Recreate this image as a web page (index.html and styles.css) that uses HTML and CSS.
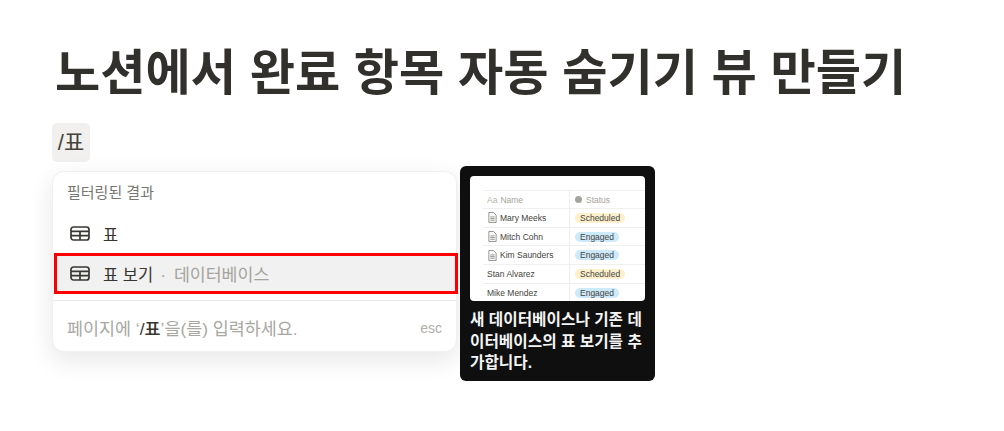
FILE: index.html
```html
<!DOCTYPE html>
<html lang="ko">
<head>
    <meta charset="UTF-8">
    <title>노션에서 완료 항목 자동 숨기기 뷰 만들기</title>
    <link rel="stylesheet" href="styles.css">
</head>
<body>
    <div class="page">
        <h1 class="title">노션에서 완료 항목 자동 숨기기 뷰 만들기</h1>
        <div class="slash">/표</div>

        <div class="popup-row">
            <!-- Slash menu -->
            <div class="menu">
                <div class="menu-label">필터링된 결과</div>
                <div class="menu-item">
                    <svg class="table-icon" viewBox="0 0 20 15"><rect x="1" y="1" width="18" height="13" rx="2.5"/><path d="M1 5.3H19M1 9.7H19M10 5.3V14"/></svg>
                    <span>표</span>
                </div>
                <div class="menu-item selected">
                    <svg class="table-icon" viewBox="0 0 20 15"><rect x="1" y="1" width="18" height="13" rx="2.5"/><path d="M1 5.3H19M1 9.7H19M10 5.3V14"/></svg>
                    <span>표 보기</span>
                    <span class="item-sub"><span class="sep">·</span>데이터베이스</span>
                </div>
                <div class="menu-foot">
                    <span>페이지에 ‘<b>/표</b>’을(를) 입력하세요.</span>
                    <span class="esc">esc</span>
                </div>
            </div>

            <!-- Preview card -->
            <div class="preview">
                <div class="preview-img">
                    <div class="db">
                        <div class="db-row db-head">
                            <div class="db-name"><span class="aa">Aa</span>Name</div>
                            <div class="db-status"><i class="dot"></i>Status</div>
                        </div>
                        <div class="db-row">
                            <div class="db-name"><svg class="doc" viewBox="0 0 8 10"><path d="M.7.5H5L7.3 2.8V9.5H.7ZM2 4.5H6M2 6H6M2 7.5H6"/></svg>Mary Meeks</div>
                            <div class="db-status"><span class="tag yellow">Scheduled</span></div>
                        </div>
                        <div class="db-row">
                            <div class="db-name"><svg class="doc" viewBox="0 0 8 10"><path d="M.7.5H5L7.3 2.8V9.5H.7ZM2 4.5H6M2 6H6M2 7.5H6"/></svg>Mitch Cohn</div>
                            <div class="db-status"><span class="tag blue">Engaged</span></div>
                        </div>
                        <div class="db-row">
                            <div class="db-name"><svg class="doc" viewBox="0 0 8 10"><path d="M.7.5H5L7.3 2.8V9.5H.7ZM2 4.5H6M2 6H6M2 7.5H6"/></svg>Kim Saunders</div>
                            <div class="db-status"><span class="tag blue">Engaged</span></div>
                        </div>
                        <div class="db-row">
                            <div class="db-name">Stan Alvarez</div>
                            <div class="db-status"><span class="tag yellow">Scheduled</span></div>
                        </div>
                        <div class="db-row">
                            <div class="db-name">Mike Mendez</div>
                            <div class="db-status"><span class="tag blue">Engaged</span></div>
                        </div>
                    </div>
                </div>
                <p class="preview-text">새 데이터베이스나 기존 데이터베이스의 표 보기를 추가합니다.</p>
            </div>
        </div>
    </div>
</body>
</html>
```

FILE: styles.css
```css
body {
    margin: 0;
    background: #fff;
    color: #37352f;
    font-family: "Liberation Sans", "Noto Sans CJK KR", sans-serif;
    overflow: hidden;
}

.page {
    padding: 43px 0 0 52px;
}

.title {
    margin: 0 0 20px 3px;
    font-size: 49.2px;
    line-height: 60px;
    font-weight: 700;
    color: #32302c;
    white-space: nowrap;
}

.slash {
    width: 38px;
    height: 39px;
    line-height: 39px;
    text-align: center;
    font-size: 22px;
    color: #45433e;
    background: #f1f0ee;
    border-radius: 5px;
}

.popup-row {
    display: flex;
    align-items: flex-start;
    gap: 3px;
    margin-top: 4px;
}

/* slash menu */
.menu {
    box-sizing: border-box;
    width: 405px;
    height: 181px;
    margin-top: 5px;
    background: #fff;
    border: 1px solid #f0f0ee;
    border-radius: 12px;
    box-shadow: 0 8px 24px rgba(15, 15, 15, 0.1);
}

.menu-label {
    padding: 12px 14px 0;
    height: 30px;
    font-size: 15px;
    line-height: 18px;
    color: #787671;
}

.menu-item {
    display: flex;
    align-items: center;
    height: 39px;
    padding: 0 17px;
    font-size: 16.5px;
    color: #37352f;
}

.menu-item.selected {
    box-sizing: border-box;
    height: 41px;
    width: 404px;
    margin: 0 0 0 1px;
    padding: 0 13px;
    background: #f1f1f1;
    border: 3.5px solid #f00;
}

.table-icon {
    width: 20px;
    height: 15px;
    margin-right: 13px;
    fill: none;
    stroke: #3a3834;
    stroke-width: 1.7;
}

.item-sub {
    margin-left: 7px;
    font-size: 17.3px;
    color: #a5a39e;
}

.sep {
    margin-right: 8px;
}

.menu-foot {
    display: flex;
    justify-content: space-between;
    align-items: center;
    margin-top: 6px;
    padding: 0 14px;
    height: 53px;
    border-top: 1px solid #e9e9e7;
    font-size: 17.4px;
    color: #a9a7a2;
}

.menu-foot b {
    font-weight: 500;
    color: #37352f;
}

.esc {
    font-size: 14px;
    color: #b0aeaa;
}

/* preview card */
.preview {
    box-sizing: border-box;
    width: 195px;
    height: 215px;
    padding: 10px;
    background: #0f0f0f;
    border-radius: 6px;
}

.preview-img {
    height: 125px;
    background: #fff;
    border-radius: 4px;
    overflow: hidden;
    padding: 14px 0 0 13px;
    box-sizing: border-box;
}

.db {
    border-top: 1px solid #efefed;
}

.db-row {
    box-sizing: border-box;
    display: grid;
    grid-template-columns: 86px 1fr;
    height: 18.7px;
    border-bottom: 1px solid #efefed;
    font-size: 8.5px;
    color: #45433e;
}

.db-head {
    height: 18px;
    color: #a5a39e;
}

.db-name,
.db-status {
    display: flex;
    align-items: center;
    white-space: nowrap;
}

.db-name {
    padding-left: 4px;
}

.db-status {
    border-left: 1px solid #efefed;
    padding-left: 5px;
}

.aa {
    margin-right: 3px;
    color: #b5b3ae;
}

.dot {
    width: 7px;
    height: 7px;
    margin-right: 4px;
    border-radius: 50%;
    background: #a5a39e;
}

.doc {
    width: 9px;
    height: 11px;
    margin: 0 3px 0 1px;
    fill: none;
    stroke: #76746f;
    stroke-width: 0.7;
}

.tag {
    padding: 0 5px;
    line-height: 10px;
    height: 10px;
    border-radius: 5px;
}

.yellow {
    background: #fdf0cc;
}

.blue {
    background: #cdeafb;
}

.preview-text {
    margin: 8px 0 0;
    font-size: 15.7px;
    line-height: 21.5px;
    font-weight: 700;
    color: #f4f4f4;
}
```
